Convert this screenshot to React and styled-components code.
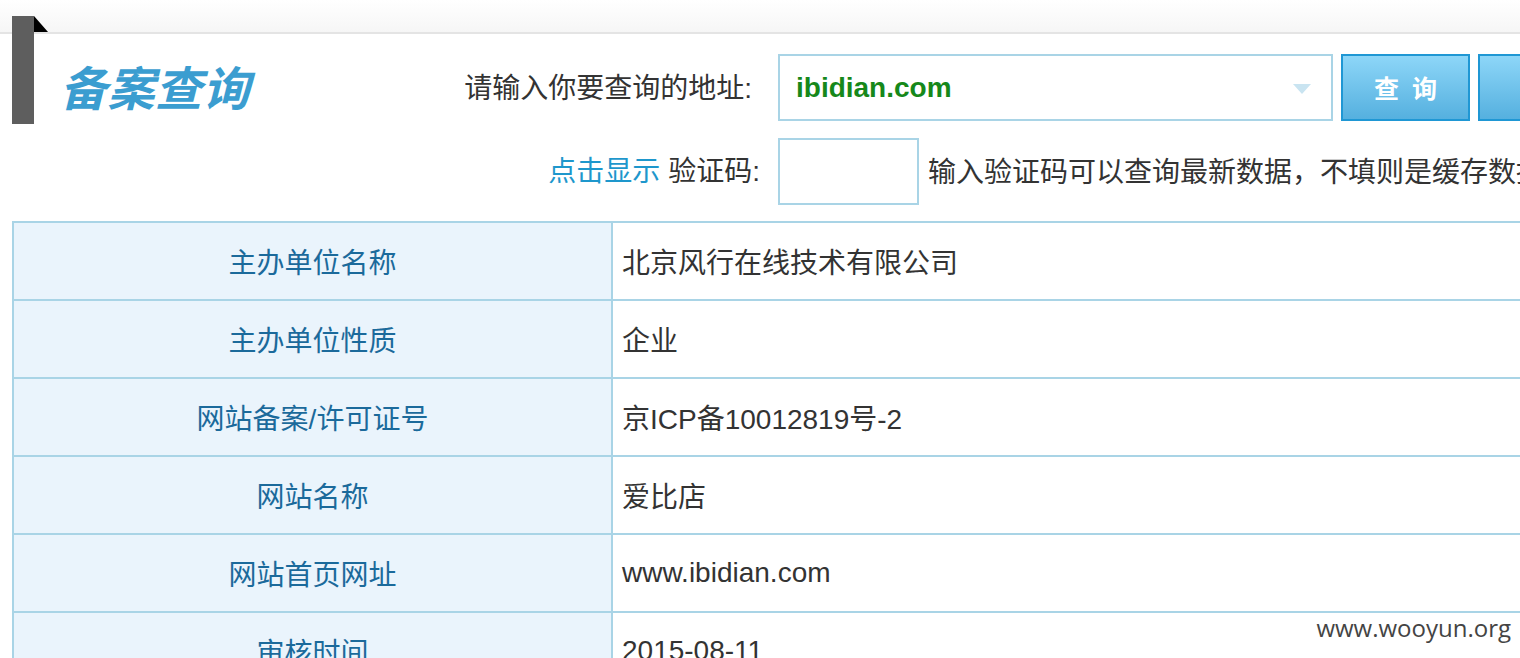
import styled, {createGlobalStyle} from 'styled-components';

const GlobalStyle = createGlobalStyle`
  html, body {
    margin: 0;
    padding: 0;
    background: #fff;
    overflow: hidden;
  }
  body {
    font-family: "Liberation Sans", "Noto Sans CJK SC", sans-serif;
    color: #333;
  }
`;

const Page = styled.div`
  position: relative;
  width: 1520px;
  height: 658px;
  overflow: hidden;
`;

const TopStrip = styled.div`
  height: 32px;
  background: linear-gradient(#ffffff, #f6f6f6);
  border-bottom: 2px solid #e4e4e4;
`;

// 左侧深灰色书签装饰
const Ribbon = styled.div`
  position: absolute;
  left: 12px;
  top: 16px;
  width: 22px;
  height: 108px;
  background: #5e5e5e;

  &::after {
    content: '';
    position: absolute;
    left: 22px;
    top: 0;
    border-left: 14px solid #000;
    border-top: 16px solid transparent;
  }
`;

const SearchArea = styled.div`
  display: grid;
  grid-template-columns: 770px 555px 129px 60px;
  column-gap: 8px;
  row-gap: 17px;
  margin-top: 20px;
`;

const LeftCell = styled.div`
  display: flex;
  align-items: center;
  justify-content: flex-end;
  padding-right: ${(props) => props.pr || 0}px;
  padding-bottom: ${(props) => props.pb || 0}px;
  box-sizing: border-box;
  height: 67px;
  white-space: nowrap;
`;

const Title = styled.h1`
  margin: 0 0 2px 60px;
  font-size: 47px;
  font-weight: bold;
  font-style: italic;
  color: #3b9dd0;
  letter-spacing: 0.5px;
  flex: 1;
`;

const Label = styled.span`
  font-size: 28px;
  color: ${(props) => props.color || '#333'};
  margin-left: ${(props) => props.ml || 0}px;
`;

const Select = styled.div`
  position: relative;
  box-sizing: border-box;
  height: 67px;
  border: 2px solid #a9d4e6;
  display: flex;
  align-items: center;
  padding-left: 16px;
  font-size: 28px;
  font-weight: bold;
  color: #16881a;

  &::after {
    content: '';
    position: absolute;
    right: 20px;
    top: 28px;
    border-top: 10px solid #c9e4f1;
    border-left: 9px solid transparent;
    border-right: 9px solid transparent;
  }
`;

const Button = styled.button`
  box-sizing: border-box;
  height: 67px;
  border: 2px solid #1f97d4;
  background: linear-gradient(#8dd6f8, #55b0df);
  color: #fff;
  font-family: inherit;
  font-size: 25px;
  font-weight: bold;
  letter-spacing: 13px;
  padding: 0 0 2px 13px;
`;

const CaptchaRow = styled.div`
  grid-column: 2 / 5;
  display: flex;
  align-items: center;
  gap: 9px;
  height: 67px;
`;

const CaptchaInput = styled.div`
  flex: 0 0 auto;
  box-sizing: border-box;
  width: 141px;
  height: 67px;
  border: 2px solid #a9d4e6;
`;

const Hint = styled.span`
  font-size: 28px;
  color: #333;
  white-space: nowrap;
  padding-bottom: 4px;
`;

const Table = styled.table`
  margin: 16px 0 0 12px;
  width: 1620px;
  border-collapse: collapse;
  table-layout: fixed;
`;

const Th = styled.td`
  width: 597px;
  height: 76px;
  padding: 0;
  border: 2px solid #a9d4e6;
  background: #eaf4fc;
  color: #1b6a9b;
  font-size: 28px;
  text-align: center;
`;

const Td = styled.td`
  height: 76px;
  padding: 0 0 0 9px;
  border: 2px solid #a9d4e6;
  background: #fff;
  color: #333;
  font-size: 28px;
`;

const Watermark = styled.div`
  position: absolute;
  right: 9px;
  bottom: 14px;
  font-family: "Open Sans", "Liberation Sans", sans-serif;
  font-size: 24px;
  color: #444;
`;

const rows = [
  ['主办单位名称', '北京风行在线技术有限公司'],
  ['主办单位性质', '企业'],
  ['网站备案/许可证号', '京ICP备10012819号-2'],
  ['网站名称', '爱比店'],
  ['网站首页网址', 'www.ibidian.com'],
  ['审核时间', '2015-08-11'],
];

const App = () => {
  return (
    <Page>
      <GlobalStyle />
      <TopStrip />
      <Ribbon />
      <SearchArea>
        <LeftCell pr={18} pb={3}>
          <Title>备案查询</Title>
          <Label>请输入你要查询的地址:</Label>
        </LeftCell>
        <Select>ibidian.com</Select>
        <Button>查询</Button>
        <Button />
        <LeftCell pr={10} pb={5}>
          <Label color="#1e97cc">点击显示</Label>
          <Label ml={8}>验证码:</Label>
        </LeftCell>
        <CaptchaRow>
          <CaptchaInput />
          <Hint>输入验证码可以查询最新数据，不填则是缓存数据</Hint>
        </CaptchaRow>
      </SearchArea>
      <Table>
        <tbody>
          {rows.map(([k, v]) => (
            <tr key={k}>
              <Th>{k}</Th>
              <Td>{v}</Td>
            </tr>
          ))}
        </tbody>
      </Table>
      <Watermark>www.wooyun.org</Watermark>
    </Page>
  );
};

export default App;
